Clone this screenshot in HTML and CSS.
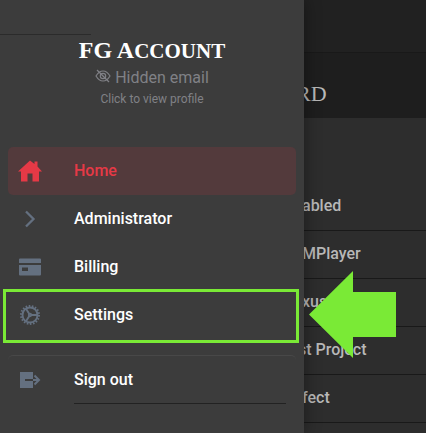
FILE: index.html
```html
<!DOCTYPE html>
<html lang="en">
<head>
<meta charset="utf-8">
<meta name="viewport" content="width=device-width, initial-scale=1">
<title>FG Account</title>
<link rel="stylesheet" href="styles.css">
</head>
<body>
<main class="page">
  <header class="topbar"></header>
  <h1 class="page-title">RD</h1>
  <ul class="projects">
    <li>abled</li>
    <li>MPlayer</li>
    <li>xus</li>
    <li class="long">st Project</li>
    <li>fect</li>
  </ul>
</main>
<aside class="drawer">
  <div class="drawer-top"></div>
  <a class="profile" href="#profile">
    <strong class="profile-name"><span class="cap">FG A</span>ccount</strong>
    <span class="profile-email">
      <svg class="eye" viewBox="0 0 16 14" aria-hidden="true"><path d="M1 7Q4 2 8 2T15 7Q12 12 8 12T1 7Z"/><circle cx="8" cy="7" r="2.700"/><path d="M2 1L14 13"/></svg>
      Hidden email
    </span>
    <span class="profile-hint">Click to view profile</span>
  </a>
  <nav>
    <ul class="menu">
      <li><a class="item active" href="#home">
        <svg class="icon" viewBox="0 0 24 24" aria-hidden="true"><path d="M12 1.500L16.500 5V2.500H19.500V7.500L24 12.500H21V22.500H14.500V14.500H9.500V22.500H3V12.500H0Z"/></svg>
        Home</a></li>
      <li><a class="item" href="#administrator">
        <svg class="icon line" viewBox="0 0 24 24" aria-hidden="true"><path d="M8 4.500L15.500 12L8 19.500"/></svg>
        Administrator</a></li>
      <li><a class="item" href="#billing">
        <svg class="icon" viewBox="0 0 24 24" aria-hidden="true"><path fill-rule="evenodd" d="M2 3.500H22Q23 3.500 23 4.500V8H1V4.500Q1 3.500 2 3.500ZM1 10H23V19.500Q23 20.500 22 20.500H2Q1 20.500 1 19.500ZM4 12.500V16H10V12.500Z"/></svg>
        Billing</a></li>
      <li class="highlight"><a class="item" href="#settings">
        <svg class="icon gear" viewBox="0 0 24 24" aria-hidden="true"><circle class="teeth" cx="12" cy="12" r="9"/><circle cx="12" cy="12" r="7.500"/><circle cx="12" cy="12" r="1.200"/><path d="M13 12H19M11.300 11L8 5.700M11.300 13L8 18.300"/></svg>
        Settings</a>
        <svg class="arrow" viewBox="0 0 87 87" aria-hidden="true"><path d="M0 43.500L44 0V21H87V66H44V87Z"/></svg>
      </li>
    </ul>
    <div class="menu-end">
      <a class="item" href="#sign-out">
        <svg class="icon exit" viewBox="0 0 24 24" aria-hidden="true"><path class="door" d="M2 4H15V20H2Z"/><path class="notch" d="M7 12H15"/><path d="M15 12H21M16.500 7.500L21 12L16.500 16.500"/></svg>
        Sign out</a>
    </div>
  </nav>
</aside>
</body>
</html>
```
FILE: styles.css
```css
* { box-sizing: border-box; }
body {
  margin: 0;
  min-height: 100vh;
  background: #2d2d2d;
  color: #fff;
  font: 500 16px/24px Roboto, sans-serif;
}
ul { list-style: none; margin: 0; padding: 0; }
a { color: inherit; text-decoration: none; }

.page { color: #b8b8b8; }
.topbar { height: 53px; background: #212121; border-bottom: 1px solid #191919; }
.page-title {
  height: 65px;
  margin: 0;
  padding: 16px 0 0 296px;
  background: #1e1e1e;
  font: 400 22px/50px "Liberation Serif", serif;
}
.projects { padding-top: 65px; }
.projects li {
  height: 48px;
  padding-left: 302px;
  border-bottom: 1px solid #191919;
  line-height: 46px;
}
.projects .long { padding-left: 298px; }

.drawer {
  position: absolute;
  inset: 0 auto 0 0;
  width: 304px;
  background: #3c3c3c;
  box-shadow: 0 0 16px rgba(0, 0, 0, .4);
}
.drawer-top { width: 30%; height: 35px; border-bottom: 1px solid #2b2b2b; }
.profile {
  display: flex;
  flex-direction: column;
  align-items: center;
  height: 112px;
  color: #808186;
}
.profile-name {
  color: #fff;
  font: 700 21px/31px "Liberation Serif", serif;
  text-transform: uppercase;
}
.cap { font-size: 24px; }
.profile-email { display: flex; gap: 4px; font-weight: 400; line-height: 22px; }
.eye { width: 16px; height: 14px; margin-top: 2px; fill: none; stroke: currentColor; stroke-width: 1.2; }
.profile-hint { font-size: 12px; font-weight: 400; line-height: 20px; }

.menu { padding: 0 8px; }
.item {
  display: flex;
  align-items: center;
  gap: 32px;
  height: 48px;
  padding: 0 10px;
  border-radius: 5px;
}
.icon { width: 24px; height: 24px; fill: #647080; }
.active { background: #533a3c; color: #e63946; }
.active .icon { fill: #e63946; }
.item .line, .item .gear { fill: none; stroke: #647080; stroke-width: 2.3; }
.item .gear { stroke-width: 1.9; }
.teeth { stroke-width: 2; stroke-dasharray: 1.6 1.542; }
.exit { stroke: #647080; stroke-width: 2; }
.door { fill: #647080; stroke: none; }
.exit path:last-child { fill: none; }
.notch { stroke: #3c3c3c; }

.highlight { position: relative; }
.highlight::before {
  content: "";
  position: absolute;
  inset: -2px -3px -4px -5px;
  border: 3px solid #7aea36;
  pointer-events: none;
}
.arrow { position: absolute; left: 301px; top: -20px; width: 87px; height: 87px; fill: #7aea36; }

.menu-end {
  margin: 16px 8px 0;
  border-top: 1px solid #484848;
  border-radius: 5px;
}
.menu-end::after {
  content: "";
  display: block;
  margin: -1px 10px 0 66px;
  border-bottom: 1px solid #222;
}
```
